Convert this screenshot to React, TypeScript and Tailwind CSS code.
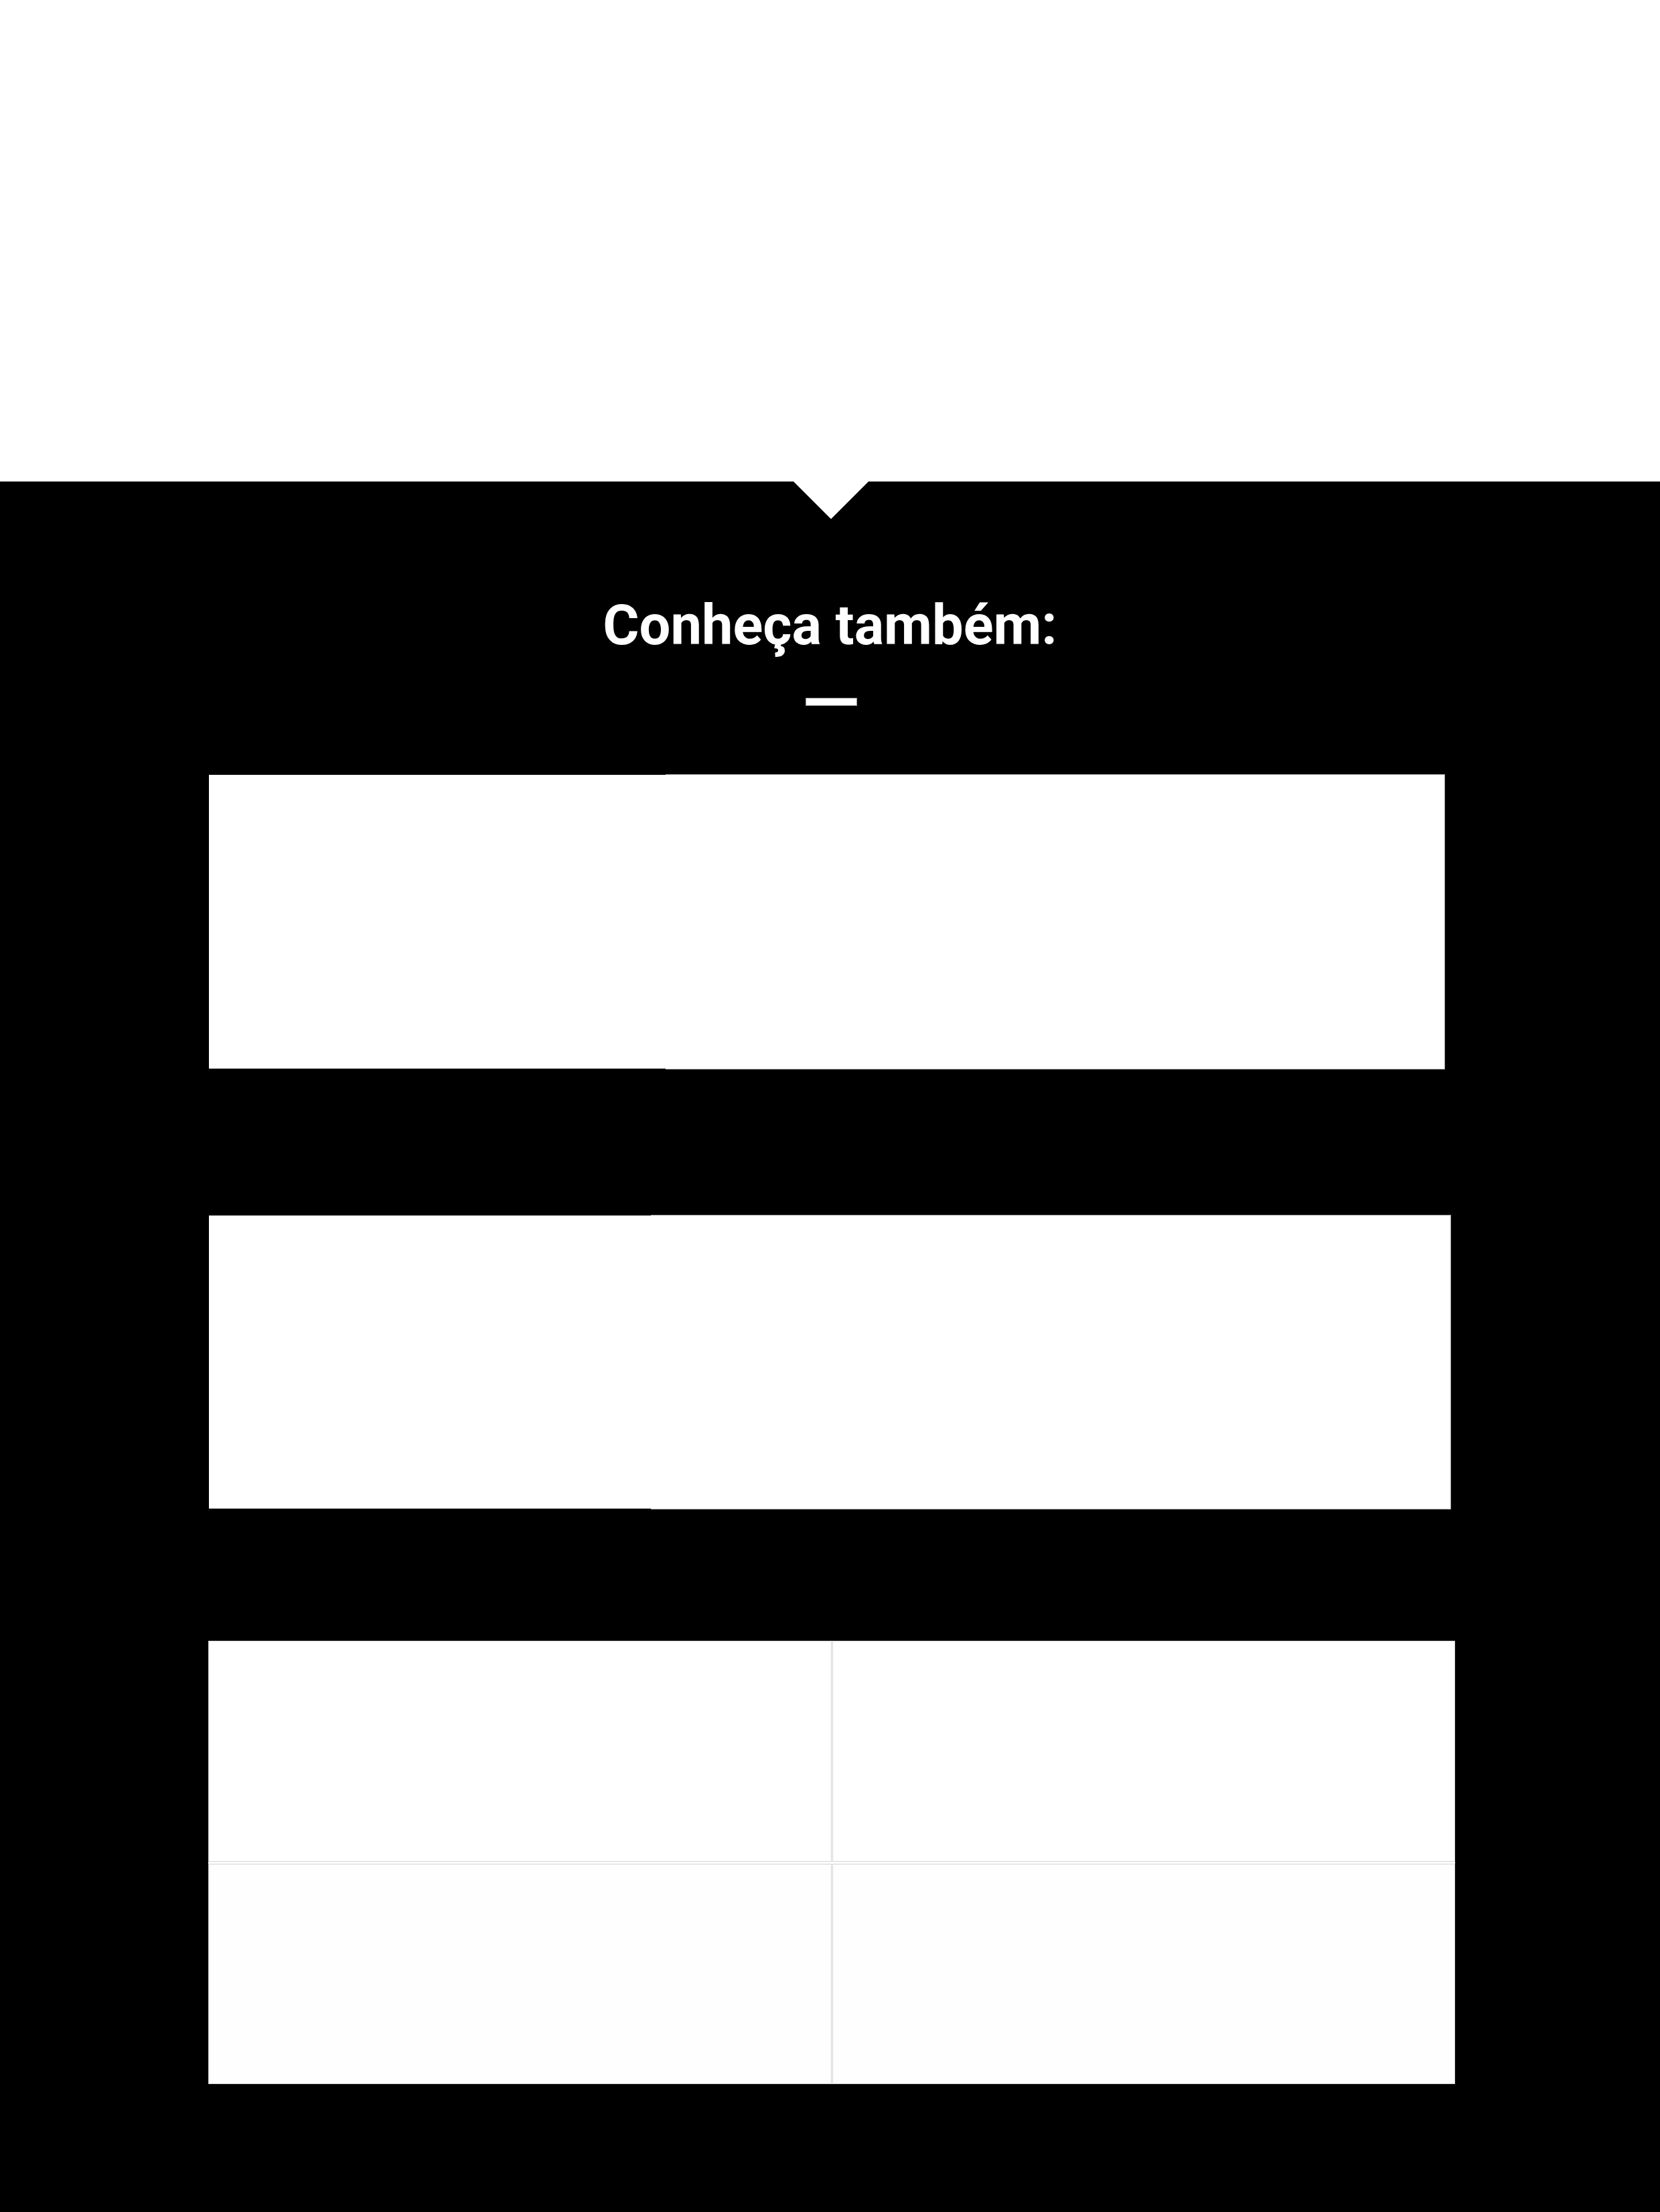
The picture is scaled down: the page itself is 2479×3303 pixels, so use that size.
import React from "react";

function Box({ className }: { className: string }) {
  return <div className={className} />;
}

export default function App() {
  return (
    <div className="w-[2479px] h-[3303px] flex flex-col bg-black">
      <div className="h-[719px] shrink-0 bg-white" />
      <section className="relative flex-1 bg-black flex flex-col">
        <div className="absolute left-[1185px] top-0 w-0 h-0 border-l-[56px] border-r-[56px] border-t-[56px] border-l-transparent border-r-transparent border-t-white" />
        <h2 className="mt-[173px] text-center text-white font-bold text-[83px] leading-none font-['Roboto',sans-serif]">
          Conheça também:
        </h2>
        <div className="mt-[67px] mx-auto w-[77px] h-[12px] bg-white border border-[#9a9a9a] translate-x-[2px]" />

        <div className="mt-[102px] pl-[312px] flex flex-col">
          <div className="flex items-start">
            <Box className="mt-[1px] w-[682px] h-[439px] bg-white border-b border-[#a8a8a8]" />
            <Box className="w-[1164px] h-[441px] bg-white border-t border-r border-b border-[#9c9c9c]" />
          </div>

          <div className="mt-[217px] flex items-start">
            <Box className="mt-[1px] w-[660px] h-[438px] bg-white border-b border-[#a8a8a8]" />
            <Box className="w-[1195px] h-[440px] bg-white border-t border-r border-b border-[#9c9c9c]" />
          </div>

          <div className="mt-[196px] -ml-[1px] w-[1862px] grid grid-cols-2 gap-x-[1px] gap-y-[3px] bg-white">
            <div className="h-[330px] bg-white border border-[#d2d2d2]" />
            <div className="h-[330px] bg-white border border-[#d2d2d2]" />
            <div className="h-[329px] bg-[#fefefe] border border-[#d2d2d2]" />
            <div className="h-[329px] bg-[#fefefe] border border-[#d2d2d2]" />
          </div>
        </div>
      </section>
    </div>
  );
}
